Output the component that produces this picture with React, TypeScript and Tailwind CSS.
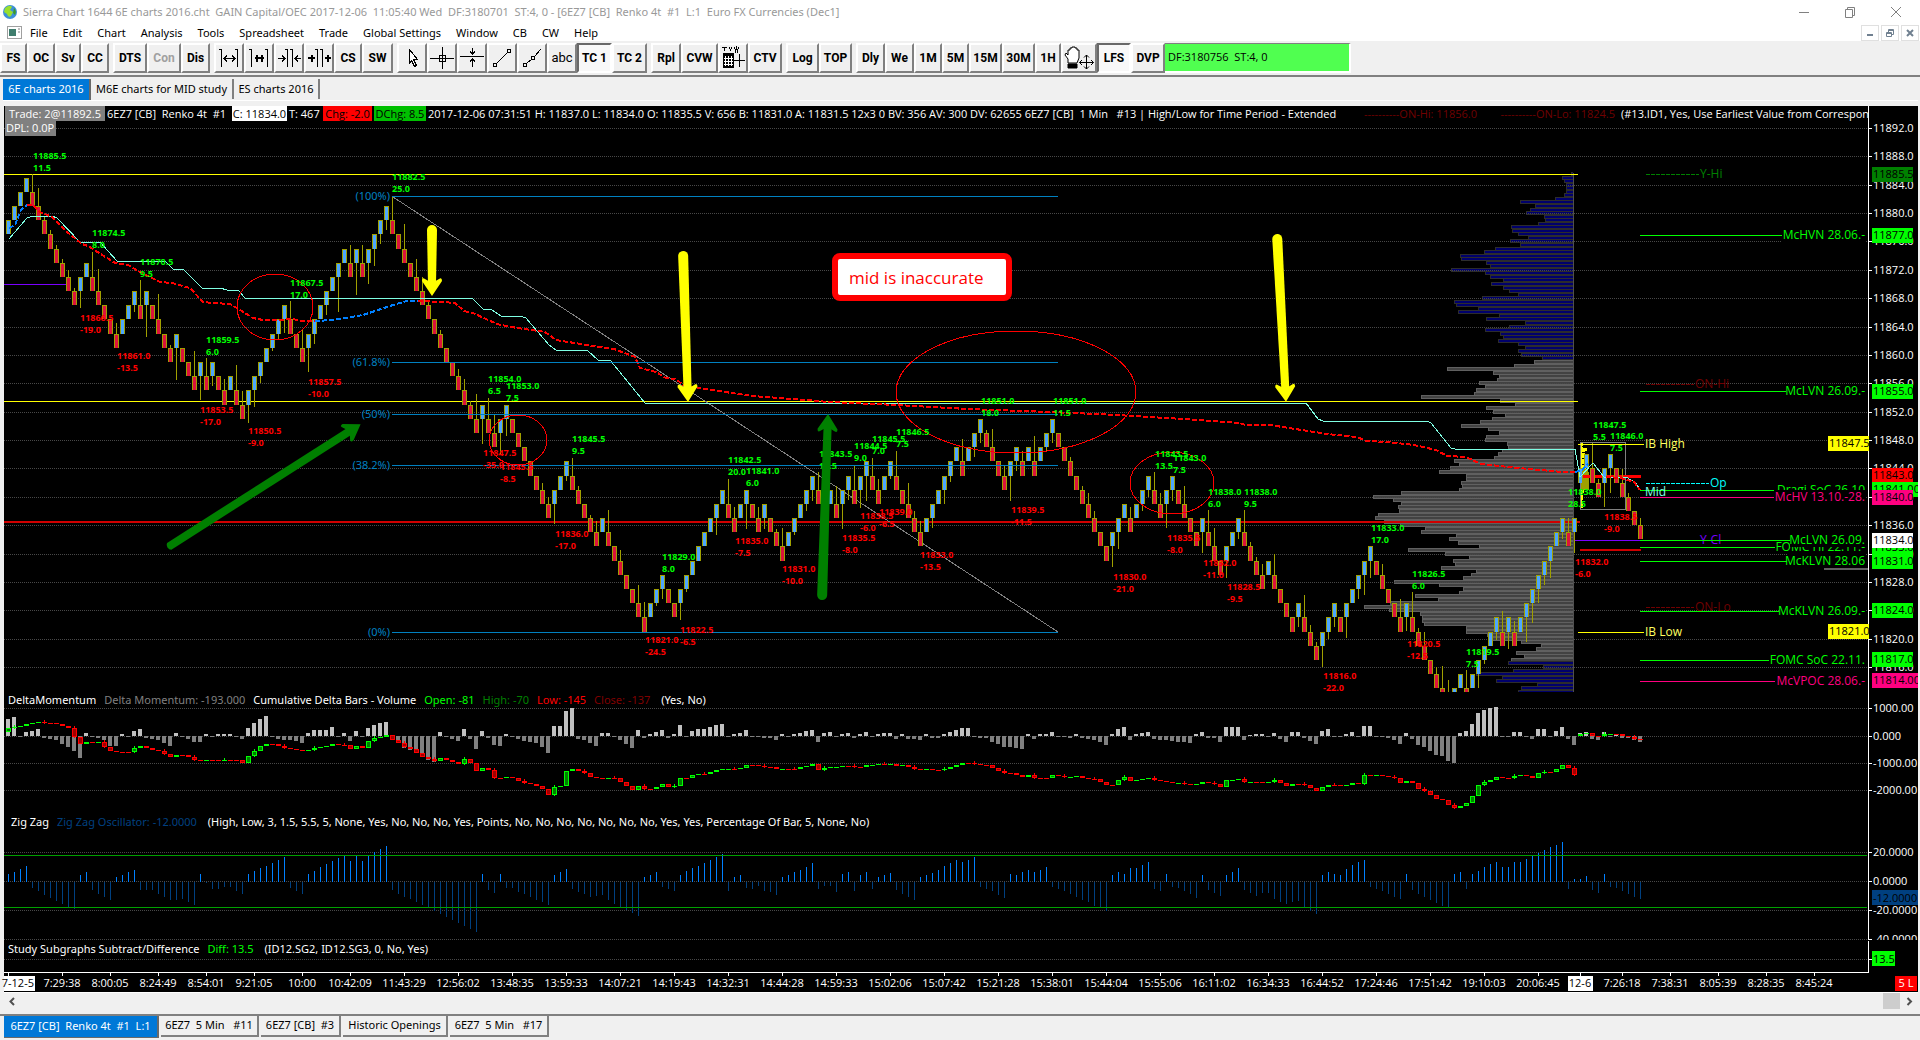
import type { ReactNode } from 'react'

const LIME = '#00ff00'
const RED = '#ff0000'
const PINK = '#ff0080'
const YELLOW = '#ffff00'
const FIB = '#0080c0'
const MAROON = '#700000'

const barX = (i: number) => 9 + i * 6
const priceY = (p: number) => Math.round(128 + (11892 - p) * 7.092)

// brick runs of the first session: positive = up bricks, negative = down bricks
const runs = [
  4, -8, 2, -5, 3, -1, 1, -4, 1, -3, 1, -1, 1, -2, 1, -2, 7, -3, 7, -1, 1, -1, 4, -15, 1, -2, 2, -7, 3, -5, 1, -7, 3, -2,
  8, -2, 2, -2, 1, -3, 5, -2, 1, -1, 2, -1, 2, -2, 2, -5, 6, -1, 3, -4, 2, -1, 1, -1, 3, -9, 3, -1, 3, -2, 2, -4, 1, -3,
  3, -4, 1, -4, 1, -3, 3, -1, 5, -5, 1, -7, 2, -1, 5, -1, 1, -1, 8, -1, 1,
]
const runsToday = [2, -2, 2, -5]

const wicks: Record<number, number> = {
  4: 18, 5: 18, 6: 4, 7: 4, 8: 4, 9: 4, 10: 7, 11: 3, 12: 17, 14: 25, 15: 22, 18: 11, 21: 7, 22: 25, 23: 32, 25: 25, 27: 3,
  28: 32, 31: 25, 32: 24, 33: 18, 34: 10, 36: 11, 38: 25, 39: 14, 40: 18, 41: 17, 42: 7, 44: 3, 45: 6, 46: 14, 47: 18,
  49: 18, 50: 24, 51: 10, 53: 10, 55: 35, 57: 18, 58: 32, 59: 18, 60: 21, 61: 17, 62: 10, 63: 10, 64: 24, 66: 25, 68: 18,
  69: 14, 70: 3, 72: 4, 75: 7, 76: 11, 77: 4, 78: 25, 79: 25, 80: 21, 81: 18, 82: 22, 83: 17, 89: 7, 90: 7, 91: 20, 93: 5,
  94: 18, 95: 4, 97: 3, 98: 11, 100: 22, 102: 11, 105: 18, 106: 15, 108: 3, 109: 10, 112: 17, 113: 3, 118: 17, 120: 25,
  121: 11, 123: 25, 125: 11, 126: 11, 128: 3, 129: 18, 131: 3, 133: 7, 134: 11, 135: 18, 138: 18, 139: 25, 140: 10,
  141: 25, 142: 18, 143: 25, 144: 18, 145: 11, 147: 3, 148: 25, 150: 21, 151: 7, 152: 11, 154: 10, 156: 14, 157: 6,
  159: 22, 161: 10, 162: 10, 163: 3, 164: 18, 166: 10, 167: 25, 168: 10, 169: 10, 171: 25, 173: 4, 174: 10, 177: 4, 179: 4,
  180: 11, 181: 7, 184: 21, 185: 17, 187: 11, 189: 7, 190: 7, 191: 18, 192: 11, 193: 24, 194: 11, 196: 18, 199: 21,
  200: 22, 201: 18, 203: 17, 205: 7, 206: 22, 207: 4, 208: 4, 209: 11, 211: 21, 215: 10, 216: 22, 217: 7, 218: 4, 219: 21,
  220: 7, 221: 10, 223: 21, 225: 10, 226: 20, 227: 17, 229: 11, 232: 18, 233: 14, 234: 25, 235: 4, 236: 14, 238: 7,
  239: 22, 240: 22, 243: 18, 245: 14, 246: 4, 248: 8, 249: 21, 250: 17, 251: 11, 253: 25, 254: 20, 255: 14, 256: 10,
  257: 17, 259: 7, 260: 14, 261: 21, 264: 25, 265: 4, 266: 24, 267: 25, 269: 14, 270: 4, 272: 7,
}

type Brick = { i: number; top: number; up: boolean }

function buildBricks(seq: number[], start: number, firstIndex: number) {
  const out: Brick[] = []
  let top = start
  let i = firstIndex
  for (const run of seq) {
    for (let n = 0; n < Math.abs(run); n++) {
      top += run > 0 ? 2 : -2
      out.push({ i, top, up: run > 0 })
      i++
    }
  }
  return out
}

const bricks = [...buildBricks(runs, 11877, 0), ...buildBricks(runsToday, 11842, 262)]

// volume at price, one row every half point from 11885.5 downwards
const profile = [
  2, 11, 9, 7, 7, 7, 9, 18, 53, 38, 43, 47, 29, 28, 35, 62, 61, 55, 45, 63, 53, 78, 89, 113, 112, 87, 83, 122, 88, 83, 70,
  82, 70, 64, 55, 91, 119, 117, 95, 115, 74, 87, 48, 64, 88, 73, 70, 75, 55, 48, 55, 52, 31, 39, 59, 126, 80, 74, 76, 94,
  88, 97, 99, 152, 73, 58, 87, 80, 68, 81, 93, 112, 85, 74, 87, 88, 66, 65, 71, 75, 79, 119, 114, 123, 134, 107, 107, 112,
  111, 114, 172, 200, 180, 172, 175, 174, 195, 198, 189, 173, 148, 152, 117, 124, 115, 94, 165, 128, 104, 120, 118, 132,
  97, 102, 110, 179, 134, 110, 114, 158, 135, 183, 209, 184, 153, 151, 151, 149, 107, 107, 86, 82, 52, 32, 37, 57, 49, 62,
  65, 30, 60, 97, 71, 77, 36, 52, 55,
]

// same for the new session, three pixels a row
const profileToday = [3, 3, 7, 5, 8, 5, 7, 4, 6, 8, 9, 9, 9, 9, 9, 9, 4, 3, 3, 3, 3, 3]

const momentum = [
  17, 19, -1, 4, 5, 7, -2, -3, -4, -8, -11, -15, -22, 3, -1, -2, -4, -10, -10, 2, -1, 5, 7, -2, -3, -4, -7, -10, 3, -1, -3,
  -6, -6, 2, -1, 2, 2, 2, -1, -3, 8, 13, 17, 20, -1, -3, -4, -4, -5, -7, 3, 6, 6, 6, 9, -1, 3, -5, 5, -1, 8, 11, 13, 14,
  -4, -7, -12, -14, -14, -17, -24, -26, 4, -1, -3, -5, 7, -3, -13, 5, -2, -9, -10, 2, -1, -3, -5, -6, -7, -11, -17, 10, 10,
  25, 28, -3, -4, -7, -10, 3, 3, -1, -4, -8, -12, 6, -2, 2, 4, 6, -2, 2, 11, -1, 5, 7, 7, 9, 11, 12, -1, 2, 3, 6, -1, -1,
  -2, -2, -4, 2, -1, 2, 3, 5, 6, -6, 3, 4, -1, 2, 3, -2, 2, 4, -1, 2, 3, 3, -3, 2, -3, -3, -4, 2, -2, -2, 2, 4, 6, 8, 8,
  -1, -2, -2, -6, -8, -11, -11, -12, -13, 2, -3, 2, 2, 4, -1, -1, -2, 2, -2, -3, -4, -6, -9, 2, 7, 9, -4, 2, 3, 4, -3, -4,
  -4, -5, -6, -6, -7, 2, 4, -2, -2, -6, 9, 9, 9, -4, 1, 2, 2, -1, 3, -3, -6, 4, 4, -2, -5, -8, 5, 7, -1, -1, 2, 4, -1, 10,
  10, -1, -1, -2, -4, -8, 3, -3, -9, -11, -15, -19, -20, -25, -27, 3, 5, 12, 23, 26, 28, 29, -1, -1, 4, 4, -1, -3, 7, 7,
  -1, 5, 9, -3, -9, 3, 4, -3, -4, 4, -1, 2, -2, -2, -4, -6,
]

// cumulative delta closes, in pixels below the main graph
const delta = [
  48, 47, 46, 44, 43, 42, 43, 43, 44, 46, 48, 57, 64, 62, 62, 62, 67, 71, 72, 72, 72, 68, 66, 68, 70, 71, 74, 77, 75, 75,
  77, 80, 80, 80, 80, 80, 80, 80, 80, 83, 76, 71, 66, 64, 64, 66, 68, 69, 70, 71, 70, 68, 67, 66, 64, 65, 65, 69, 66, 68,
  61, 58, 57, 55, 60, 63, 67, 69, 73, 77, 79, 81, 78, 80, 82, 84, 79, 83, 91, 88, 90, 98, 98, 97, 98, 101, 103, 104, 106,
  109, 115, 107, 106, 91, 89, 91, 93, 97, 98, 99, 98, 98, 102, 106, 110, 106, 109, 109, 107, 104, 107, 106, 98, 98, 95, 94,
  94, 92, 90, 89, 89, 89, 88, 85, 85, 86, 87, 87, 89, 89, 89, 89, 87, 86, 84, 90, 88, 87, 87, 86, 86, 87, 87, 85, 85, 84,
  84, 84, 86, 85, 87, 89, 89, 89, 90, 90, 89, 87, 85, 83, 83, 84, 85, 85, 88, 91, 93, 93, 95, 97, 95, 98, 98, 98, 95, 96,
  97, 97, 96, 98, 99, 99, 102, 105, 105, 100, 97, 101, 100, 99, 98, 100, 101, 102, 103, 103, 104, 105, 104, 102, 103, 104,
  107, 100, 100, 99, 102, 102, 102, 102, 102, 100, 103, 106, 104, 104, 105, 108, 111, 107, 105, 105, 106, 105, 103, 104,
  95, 95, 95, 96, 97, 98, 103, 101, 103, 109, 111, 115, 119, 120, 125, 128, 126, 123, 116, 105, 102, 100, 97, 98, 98, 96,
  95, 96, 98, 93, 92, 92, 89, 85, 88, 95, 54, 53, 56, 56, 54, 54, 54, 56, 57, 59, 59,
]

const zigzag = [
  8, 10, 13, 16, -6, -9, -13, -16, -19, -22, -25, -27, 7, 10, -8, -12, -15, -18, 5, 7, 10, 12, -8, -8, -8, -12, -15, -18,
  -18, -17, -20, -23, 8, -1, -7, -7, -5, -5, -9, -12, 8, 11, 14, 16, 19, 22, 25, -6, -9, -12, 8, 11, 15, 18, 21, 24, 26,
  21, 26, 21, 26, 30, 33, 36, -8, -12, -15, -17, -20, -23, -26, -29, -32, -35, -38, -41, -44, -47, -50, 8, -8, -11, 8, -6,
  -6, -10, -12, -15, -18, -20, -23, 7, 10, 13, -7, -10, -12, -15, -14, -13, -18, -22, -25, -28, -31, -34, 5, 7, 10, -5, -7,
  -9, 7, 11, 14, 16, 19, 22, 25, 28, -9, 5, 7, -6, -7, -4, -9, -10, -13, 5, 7, 10, 12, 15, 19, -7, -4, -4, -10, 8, 10, -9,
  7, 10, -7, 5, 7, 9, -8, -12, -15, -18, 5, 7, 9, 12, 16, 19, 22, 20, 22, 25, -5, -7, -9, -13, -16, 8, 7, 10, 12, 10, 12,
  15, -5, -7, -9, -12, -15, -18, -20, -24, -26, -29, 7, 10, 8, 14, 14, 17, 20, -7, -9, 8, -5, -6, -9, -12, -16, 7, -8,
  -11, -14, 7, 10, 14, -8, -11, -14, -11, -11, -17, -20, -22, -20, -19, -26, -29, -32, 7, 10, 8, 7, 13, 17, 20, 22, -5,
  -7, -9, -12, -15, -17, 8, -8, -12, -15, -18, -21, -24, -26, 8, 10, -7, 8, 11, 15, 18, 20, 15, 15, 20, 20, 23, 26, 29,
  32, 35, 37, 40, -7, 3, 3, 6, -8, -11, 8, -5, -6, -9, -12, -15, -17,
]

// swing labels: x, y, price, length of the swing
const swings: [number, number, string, string][] = [
  [33, 156, '11885.5', '11.5'], [92, 233, '11874.5', '8.0'], [140, 262, '11870.5', '9.5'], [206, 340, '11859.5', '6.0'],
  [290, 283, '11867.5', '17.0'], [392, 177, '11882.5', '25.0'], [80, 318, '11866.5', '-19.0'], [117, 356, '11861.0', '-13.5'],
  [200, 410, '11853.5', '-17.0'], [248, 431, '11850.5', '-9.0'], [308, 382, '11857.5', '-10.0'], [488, 379, '11854.0', '6.5'],
  [506, 386, '11853.0', '7.5'], [483, 453, '11847.5', '-35.0'], [500, 467, '11845.5', '-8.5'], [572, 439, '11845.5', '9.5'],
  [728, 460, '11842.5', '20.0'], [746, 471, '11841.0', '6.0'], [819, 454, '11843.5', '12.5'], [854, 446, '11844.5', '9.0'],
  [872, 439, '11845.5', '7.0'], [896, 432, '11846.5', '7.5'], [555, 534, '11836.0', '-17.0'], [662, 557, '11829.0', '8.0'],
  [735, 541, '11835.0', '-7.5'], [782, 569, '11831.0', '-10.0'], [645, 640, '11821.0', '-24.5'], [680, 630, '11822.5', '-6.5'],
  [842, 538, '11835.5', '-8.0'], [860, 516, '11838.5', '-6.0'], [879, 512, '11839.0', '-6.5'], [920, 555, '11833.0', '-13.5'],
  [981, 401, '11851.0', '18.0'], [1053, 401, '11851.0', '11.5'], [1155, 454, '11843.5', '13.5'], [1173, 458, '11843.0', '7.5'],
  [1208, 492, '11838.0', '6.0'], [1244, 492, '11838.0', '9.5'], [1371, 528, '11833.0', '17.0'], [1011, 510, '11839.5', '-11.5'],
  [1113, 577, '11830.0', '-21.0'], [1167, 538, '11835.5', '-8.0'], [1203, 563, '11832.0', '-11.0'], [1227, 587, '11828.5', '-9.5'],
  [1323, 676, '11816.0', '-22.0'], [1412, 574, '11826.5', '6.0'], [1466, 652, '11819.5', '7.5'], [1568, 492, '11838.0', '28.5'],
  [1593, 425, '11847.5', '5.5'], [1610, 436, '11846.0', '7.5'], [1407, 644, '11820.5', '-12.5'], [1575, 562, '11832.0', '-6.0'],
  [1604, 517, '11838.5', '-9.0'],
]

const fibs: [number, string][] = [[196, '(100%)'], [362, '(61.8%)'], [414, '(50%)'], [465, '(38.2%)'], [632, '(0%)']]

// named levels on the right: y, end of line, label, colour
const levels: [number, number, string, string][] = [
  [235, 1782, 'McHVN 28.06.-', LIME], [391, 1786, 'McLVN 26.09.-', LIME], [490, 1776, 'Dragi SoC 26.10', LIME],
  [547, 1775, 'FOMC Hi 22.11.-', LIME], [561, 1787, 'McKLVN 28.06', LIME], [611, 1779, 'McKLVN 26.09.-', LIME],
  [660, 1769, 'FOMC SoC 22.11.', LIME], [681, 1775, 'McVPOC 28.06.-', PINK], [497, 1774, 'McHV 13.10.-28.', PINK],
  [540, 1790, 'McLVN 26.09.', LIME],
]

// price boxes: y, x, width, text, background
const boxes: [number, number, number, string, string][] = [
  [174, 1872, 41, '11885.5', '#008000'], [235, 1872, 41, '11877.0', LIME], [391, 1872, 41, '11855.0', LIME],
  [443, 1828, 41, '11847.5', YELLOW], [475, 1872, 41, '11843.0', RED], [489, 1872, 46, '11841.00', LIME],
  [497, 1872, 41, '11840.0', PINK], [547, 1872, 41, '11833.0', LIME], [540, 1872, 41, '11834.0', '#ffffff'],
  [561, 1872, 41, '11831.0', LIME], [610, 1872, 41, '11824.0', LIME], [631, 1828, 41, '11821.0', YELLOW],
  [659, 1872, 41, '11817.0', LIME], [680, 1872, 46, '11814.00', PINK],
]

const times: [number, string][] = [
  [62, '7:29:38'], [110, '8:00:05'], [158, '8:24:49'], [206, '8:54:01'], [254, '9:21:05'], [302, '10:00'],
  [350, '10:42:09'], [404, '11:43:29'], [458, '12:56:02'], [512, '13:48:35'], [566, '13:59:33'], [620, '14:07:21'],
  [674, '14:19:43'], [728, '14:32:31'], [782, '14:44:28'], [836, '14:59:33'], [890, '15:02:06'], [944, '15:07:42'],
  [998, '15:21:28'], [1052, '15:38:01'], [1106, '15:44:04'], [1160, '15:55:06'], [1214, '16:11:02'], [1268, '16:34:33'],
  [1322, '16:44:52'], [1376, '17:24:46'], [1430, '17:51:42'], [1484, '19:10:03'], [1538, '20:06:45'], [1622, '7:26:18'],
  [1670, '7:38:31'], [1718, '8:05:39'], [1766, '8:28:35'], [1814, '8:45:24'],
]

const midLine =
  '9,239 27,218 33,216 52,216 57,218 80,242 100,242 117,261 165,261 173,269 184,270 202,288 220,288 227,290 238,290 245,298 472,298 483,309 492,310 501,316 520,316 526,318 549,345 556,350 587,350 598,360 610,360 645,403 1306,403 1318,419 1323,421 1427,421 1431,423 1451,448 1455,449 1575,449 1580,477 1593,463 1604,477 1626,477 1636,483 1640,490'
const vwapRed = [
  '27,205 33,205 40,212 52,217 67,232 82,244 88,246 115,263 128,265 140,272 160,282 172,283 190,288 203,302 213,303 230,304 240,310 253,318 263,320 277,320 292,319 303,321 315,321',
  '418,301 443,302 455,303 464,311 473,313 497,324 511,327 545,332 556,340 587,345 614,349 635,357 640,368 656,372 666,378 676,379 683,385 705,389 752,396 807,400 828,402 897,405 967,409 1050,412 1117,415 1183,419 1240,423 1245,425 1270,425 1327,434 1357,437 1366,441 1388,442 1414,445 1436,450 1447,456 1466,457 1481,464 1518,468 1562,472 1575,472',
  '1606,477 1621,478 1634,482 1640,490',
]
const vwapBlue = [
  '9,228 15,225 21,210 27,205',
  '315,321 333,320 363,315 393,305 407,301 418,301',
  '1575,472 1582,470 1588,464',
]

function GridLine({ y }: { y: number }) {
  return <path d={`M4 ${y}.5H1868`} stroke="#484848" strokeDasharray="1 1" />
}

function AxisLabel({ y, text }: { y: number; text: string }) {
  return (
    <g>
      <path d={`M1868 ${y}.5h4`} stroke="#fff" />
      <text x="1873" y={y + 4} fill="#fff">{text}</text>
    </g>
  )
}

function Arrow({ x1, y1, x2, y2, color, width = 10 }: { x1: number; y1: number; x2: number; y2: number; color: string; width?: number }) {
  const angle = (Math.atan2(y2 - y1, x2 - x1) * 180) / Math.PI
  const len = Math.round(Math.hypot(x2 - x1, y2 - y1))
  return (
    <g transform={`translate(${x1} ${y1}) rotate(${angle})`} fill={color} shapeRendering="auto">
      <path d={`M5 ${-width / 2}L${len - 12} -4V4L5 ${width / 2}A5 5 0 0 1 5 ${-width / 2}Z`} />
      <path d={`M${len} 0L${len - 15} 10Q${len - 19} 10 ${len - 17} 7L${len - 13} 0L${len - 17} -7Q${len - 19} -10 ${len - 15} -10Z`} />
    </g>
  )
}

function PriceGraph() {
  const grid: number[] = []
  for (let p = 11892; p >= 11816; p -= 4) grid.push(p)

  return (
    <svg viewBox="4 121 1914 571" className="block w-full text-[11px]" shapeRendering="crispEdges" fill="none">
      {profile.map((w, k) => {
        const y = priceY(11885.5 - k * 0.5) - 2
        const blue = k < 53 || k > 137
        return (
          <g key={k}>
            <rect x={1573 - w} y={y} width={w} height="4" fill={blue ? '#2c2c2c' : '#606060'} />
            <rect x={1574 - w} y={y + 1} width={w - 1} height="2" fill={blue ? '#00006c' : '#424242'} />
          </g>
        )
      })}
      <path d="M1573.5 173V692" stroke="#505050" />
      {grid.map((p) => <GridLine key={p} y={priceY(p)} />)}
      <path d="M4 174.5H1578M4 401.5H1578" stroke={YELLOW} />
      <path d="M4 522H1580" stroke="#d00000" strokeWidth="2" />
      <path d="M4 284.5H67M1575 540.5H1640" stroke="#7a00ff" />
      <path d="M393 197L1058 632" stroke="#808080" />

      {/* opening range box and its small profile */}
      {profileToday.map((w, k) => (
        <g key={k}>
          <rect x="1580" y={442 + k * 3} width={w} height="3" fill={k > 8 && k < 16 ? '#a0a000' : YELLOW} />
          {k % 2 === 1 && (k < 9 || k > 15) && <rect x="1582" y={443 + k * 3} width={w - 2} height="1" fill="#000" />}
        </g>
      ))}
      <path d="M1580.5 442.5H1625.5V509.5H1580.5Z" stroke="#808080" />
      <path d="M1583 476H1641" stroke={RED} strokeWidth="3" />
      <path d="M1580 550H1641" stroke="#d00000" strokeWidth="2" />

      {bricks.map((b) => {
        const y = priceY(b.top)
        const h = priceY(b.top - 2) - y
        const wick = wicks[b.i] ?? 0
        const x = barX(b.i)
        return (
          <g key={b.i}>
            {wick > 0 && <rect x={x - 1} y={b.up ? y + h : y - wick} width="1" height={wick} fill="#a0a000" />}
            <rect x={x - 3} y={y} width="5" height={h} fill="#a0a000" />
            <rect x={x - 2} y={y + 1} width="3" height={h - 1} fill={b.up ? '#4da6ff' : '#dc143c'} />
          </g>
        )
      })}

      <polyline points={midLine} stroke="#7fffe4" />
      {vwapRed.map((p) => <polyline key={p} points={p} stroke={RED} strokeWidth="2" strokeDasharray="5 2" />)}
      {vwapBlue.map((p) => <polyline key={p} points={p} stroke="#0080ff" strokeWidth="2" strokeDasharray="5 2" />)}

      {fibs.map(([y, label]) => (
        <g key={label}>
          <path d={`M392 ${y}.5H1058`} stroke={FIB} />
          <text x="390" y={y + 4} textAnchor="end" fill={FIB} className="font-['Noto_Sans',sans-serif] text-[11px]">{label}</text>
        </g>
      ))}

      <g stroke={RED}>
        <ellipse cx="275" cy="307" rx="38" ry="33" />
        <ellipse cx="518" cy="440" rx="29" ry="25" />
        <ellipse cx="1016" cy="392" rx="120" ry="61" />
        <ellipse cx="1172" cy="483" rx="42" ry="31" />
      </g>

      <g className="text-[9px] font-bold">
        {swings.map(([x, y, price, size]) => (
          <g key={`${x}-${y}`} fill={size.startsWith('-') ? RED : LIME}>
            <text x={x} y={y + 3}>{price}</text>
            <text x={x} y={y + 15}>{size}</text>
          </g>
        ))}
      </g>

      <Arrow x1={432} y1={225} x2={432} y2={296} color={YELLOW} />
      <Arrow x1={683} y1={251} x2={688} y2={402} color={YELLOW} />
      <Arrow x1={1277} y1={234} x2={1286} y2={402} color={YELLOW} />
      <Arrow x1={165} y1={549} x2={361} y2={424} color="#008000" width={8} />
      <Arrow x1={822} y1={600} x2={828} y2={414} color="#008000" />

      <g shapeRendering="auto">
        <rect x="835" y="256" width="174" height="42" rx="5" fill="#fff" stroke={RED} strokeWidth="6" />
        <text x="849" y="284" fill={RED} className="text-[17px]">mid is inaccurate</text>
      </g>

      <g className="text-[12px]">
        {levels.map(([y, end, label, color]) => (
          <g key={y}>
            <path d={`M1640 ${y}.5H${end}`} stroke={color} />
            <rect x={end} y={y - 7} width={1866 - end} height="14" fill="#000" />
            <text x="1865" y={y + 4} textAnchor="end" fill={color}>{label}</text>
          </g>
        ))}
        <text x="1700" y="544" fill="#7a00ff">Y-Cl</text>
        <path d="M1640 540.5H1790" stroke={LIME} />
        <path d="M1646 174.5H1699" stroke="#008000" strokeDasharray="4 1" />
        <text x="1700" y="178" fill="#008000">Y-Hi</text>
        <path d="M1646 384.5H1694" stroke={MAROON} strokeDasharray="4 1" />
        <text x="1695" y="388" fill={MAROON}>ON-Hi</text>
        <path d="M1646 607.5H1694" stroke={MAROON} strokeDasharray="4 1" />
        <text x="1695" y="611" fill={MAROON}>ON-Lo</text>
        <path d="M1646 483.5H1709" stroke="#00ffff" strokeDasharray="4 1" />
        <text x="1710" y="487" fill="#00ffff">Op</text>
        <text x="1645" y="496" fill="#7fffe4">Mid</text>
        <path d="M1578 444.5H1644M1578 632.5H1644" stroke={YELLOW} />
        <text x="1645" y="448" fill="#ffff60">IB High</text>
        <text x="1645" y="636" fill="#ffff60">IB Low</text>
      </g>
      <path d="M1824 569H1868" stroke="#606060" strokeWidth="2" />

      <path d="M1868.5 121V692" stroke="#fff" />
      {grid.map((p) => <AxisLabel key={p} y={priceY(p)} text={`${p}.0`} />)}
      {boxes.map(([y, x, w, text, bg]) => (
        <g key={text}>
          <rect x={x} y={y - 7} width={w} height="15" fill={bg} />
          <text x={x + 1} y={y + 4} fill="#000">{text}</text>
        </g>
      ))}

      <rect x="5" y="121" width="51" height="15" fill="#808080" />
      <text x="6" y="132" fill="#fff">DPL: 0.0P</text>
    </svg>
  )
}

function DeltaGraph() {
  return (
    <svg viewBox="4 708 1914 106" className="block w-full overflow-visible text-[11px]" shapeRendering="crispEdges" fill="none">
      {[708, 736, 763, 790].map((y) => <GridLine key={y} y={y} />)}
      {momentum.map((v, i) => (
        <rect key={i} x={barX(i) - 3} y={v > 0 ? 736 - v : 736} width="4" height={Math.abs(v)} fill={v > 0 ? '#c0c0c0' : '#808080'} />
      ))}
      {delta.map((close, i) => {
        const open = i === 0 ? 52 : i === 262 ? 56 : delta[i - 1]
        const up = close < open || (close === open && i % 3 === 0)
        const y = 680 + Math.min(open, close)
        const h = Math.abs(open - close)
        const x = barX(i) - 3
        return (
          <g key={i}>
            {i % 5 === 1 && <rect x={x + 2} y={y - 2} width="1" height={h + 3} fill={up ? LIME : RED} />}
            <rect x={x} y={y} width="5" height={Math.max(h, 1)} fill={up ? LIME : RED} />
            {h > 2 && <rect x={x + 1} y={y + 1} width="3" height={h - 2} fill={up ? '#008000' : '#a00000'} />}
          </g>
        )
      })}
      <path d="M1868.5 708V814" stroke="#fff" />
      <AxisLabel y={708} text="1000.00" />
      <AxisLabel y={736} text="0.000" />
      <AxisLabel y={763} text="-1000.00" />
      <AxisLabel y={790} text="-2000.00" />
    </svg>
  )
}

function ZigZagGraph() {
  return (
    <svg viewBox="4 830 1914 110" className="block w-full text-[11px]" shapeRendering="crispEdges" fill="none">
      {[852, 881, 910, 939].map((y) => <GridLine key={y} y={y} />)}
      {zigzag.map((v, i) => (
        <rect key={i} x={barX(i) - 1} y={v > 0 ? 882 - v : 882} width="1" height={Math.abs(v)} fill={v > 0 ? '#0080ff' : '#004080'} />
      ))}
      <path d="M4 855.5H1867M4 907.5H1867" stroke="#00a000" />
      <path d="M1868.5 830V940" stroke="#fff" />
      <AxisLabel y={852} text="20.0000" />
      <AxisLabel y={881} text="0.0000" />
      <AxisLabel y={910} text="-20.0000" />
      <AxisLabel y={939} text="-40.0000" />
      <rect x="1872" y="890" width="46" height="15" fill="#004080" />
      <text x="1873" y="902" fill="#000">-12.0000</text>
    </svg>
  )
}

function TimeScale() {
  return (
    <svg viewBox="4 957 1914 35" className="block w-full overflow-visible text-[11px]" shapeRendering="crispEdges" fill="none">
      <GridLine y={959} />
      <path d="M1868.5 957V972M4 972.5H1869" stroke="#fff" />
      <path d="M1868 959.5h4" stroke="#fff" />
      <rect x="1872" y="951" width="23" height="15" fill={LIME} />
      <text x="1873" y="963" fill="#000">13.5</text>
      {times.map(([x, label]) => (
        <g key={label}>
          <path d={`M${x}.5 972v4`} stroke="#fff" />
          <text x={x} y="987" textAnchor="middle" fill="#fff">{label}</text>
        </g>
      ))}
      <path d="M8.5 972v4M1580.5 972v4" stroke="#fff" />
      <rect x="4" y="976" width="31" height="15" fill="#fff" />
      <text x="34" y="987" textAnchor="end" fill="#000">7-12-5</text>
      <rect x="1568" y="976" width="25" height="15" fill="#fff" />
      <text x="1580" y="987" textAnchor="middle" fill="#000">12-6</text>
      <rect x="1895" y="976" width="22" height="15" fill={RED} />
      <text x="1906" y="987" textAnchor="middle" fill="#fff">5 L</text>
    </svg>
  )
}

function StudyTitle({ children }: { children: ReactNode }) {
  return (
    <div className="flex pr-[49px]">
      <div className="flex h-4 flex-1 items-center gap-2 overflow-hidden border-r border-white pl-1 font-['Noto_Sans',sans-serif] leading-4 whitespace-pre">
        {children}
      </div>
    </div>
  )
}

function ToolButton({ width, pressed, disabled, children, title }: { width: string; pressed?: boolean; disabled?: boolean; children: ReactNode; title?: string }) {
  return (
    <button
      type="button"
      title={title}
      aria-label={title}
      disabled={disabled}
      className={`${width} flex h-[30px] shrink-0 items-center justify-center border-2 whitespace-nowrap disabled:text-[#a0a0a0] ${
        pressed ? 'border-t-[#696969] border-r-white border-b-white border-l-[#696969] bg-[#f8f8f8]' : 'border-t-white border-r-[#808080] border-b-[#808080] border-l-white bg-[#f0f0f0]'
      }`}
    >
      {children}
    </button>
  )
}

function Icon({ children }: { children: ReactNode }) {
  return (
    <svg width="24" height="24" viewBox="0 0 24 24" fill="none" stroke="#000" className="shrink-0" shapeRendering="crispEdges">
      {children}
    </svg>
  )
}

function Group({ children }: { children: ReactNode }) {
  return <div className="flex">{children}</div>
}

const menus = ['File', 'Edit', 'Chart', 'Analysis', 'Tools', 'Spreadsheet', 'Trade', 'Global Settings', 'Window', 'CB', 'CW', 'Help']

export default function App() {
  return (
    <div className="min-h-screen w-full overflow-hidden bg-[#f0f0f0] font-['Open_Sans','Noto_Sans',sans-serif] text-[11px] text-black">
      <header className="bg-white font-['Noto_Sans',sans-serif]">
        <div className="flex h-6 items-center pl-0.5 text-[#999999]">
          <svg width="16" height="16" viewBox="0 0 16 16">
            <circle cx="8" cy="8" r="7" fill="#3d8fd8" />
            <path d="M3 4Q8 0 10 3L8 6L11 8L9 12Q6 14 5 10L2 8Z" fill="#9adf2e" />
            <path d="M12 4Q15 7 13 11L11 9Z" fill="#3c9c28" />
          </svg>
          <h1 className="flex-1 pl-[5px] whitespace-pre">
            Sierra Chart 1644 6E charts 2016.cht  GAIN Capital/OEC 2017-12-06  11:05:40 Wed  DF:3180701  ST:4, 0 - [6EZ7 [CB]  Renko 4t  #1  L:1  Euro FX Currencies (Dec1]
          </h1>
          <div className="flex gap-[34px] pr-[18px]">
            <button type="button" aria-label="Minimize">
              <svg width="12" height="12" fill="none" stroke="#808080"><path d="M1 6.5h10" /></svg>
            </button>
            <button type="button" aria-label="Restore">
              <svg width="12" height="12" fill="none" stroke="#808080"><path d="M1.5 3.5h7v8h-7zM3.5 3.5v-2h7v8h-2" /></svg>
            </button>
            <button type="button" aria-label="Close">
              <svg width="12" height="12" fill="none" stroke="#808080"><path d="M1 1l10 10M11 1L1 11" /></svg>
            </button>
          </div>
        </div>
        <nav className="flex h-[17px] items-center pl-[7px]">
          <svg width="15" height="13" viewBox="0 0 15 13">
            <rect x="0.5" y="0.5" width="14" height="12" fill="#fff" stroke="#a0a0a0" />
            <path d="M2 3h7v7h-7z" fill="#3f7d6d" />
            <path d="M11 3h2M11 6h2" stroke="#808080" />
          </svg>
          <div className="flex flex-1 gap-[15px] pl-2 leading-4">
            {menus.map((m) => <button key={m} type="button">{m}</button>)}
          </div>
          <div className="flex gap-0.5 pr-px">
            <button type="button" aria-label="Minimize chart" className="border border-[#e0e0e0] px-0.5">
              <svg width="12" height="14" stroke="#708090" strokeWidth="2"><path d="M3 9h6" /></svg>
            </button>
            <button type="button" aria-label="Restore chart" className="border border-[#e0e0e0] px-0.5">
              <svg width="12" height="14" fill="none" stroke="#708090"><path d="M2.5 6.5h5v4h-5zM4.5 6v-2.5h5v5h-2M4 4.5h6M2 7.5h6" /></svg>
            </button>
            <button type="button" aria-label="Close chart" className="border border-[#e0e0e0] px-0.5">
              <svg width="12" height="14" stroke="#708090" strokeWidth="2"><path d="M3 4l6 6M9 4l-6 6" /></svg>
            </button>
          </div>
        </nav>
      </header>

      <div className="flex h-[36px] gap-1 border-b-2 border-[#808080] pt-0.5 font-[Roboto,sans-serif] text-[12px] font-bold">
        <Group>
          <ToolButton width="w-[27px]">FS</ToolButton>
          <ToolButton width="w-[28px]">OC</ToolButton>
          <ToolButton width="w-[26px]">Sv</ToolButton>
          <ToolButton width="w-[28px]">CC</ToolButton>
        </Group>
        <Group>
          <ToolButton width="w-[34px]">DTS</ToolButton>
          <ToolButton width="w-[34px]" disabled>Con</ToolButton>
          <ToolButton width="w-[29px]">Dis</ToolButton>
        </Group>
        <Group>
          <ToolButton width="w-[30px]" title="Increase bar spacing">
            <Icon><path d="M4.500 3v18M2 3.500h3M20.500 3v18M18 3.500h3M7 12.500h11M10 9.500l-3 3l3 3M15 9.500l3 3l-3 3" /></Icon>
          </ToolButton>
          <ToolButton width="w-[30px]" title="Increase bar width">
            <Icon>
              <path d="M4.500 3v18M2 3.500h3M20.500 3v18M18 3.500h3" />
              <path d="M8 12h9M10 9v7M15 9v7" strokeWidth="2" />
            </Icon>
          </ToolButton>
          <ToolButton width="w-[30px]" title="Decrease bar spacing">
            <Icon><path d="M10.500 3v18M8 3.500h3M15.500 3v18M13 3.500h3M1 12.500h7M18 12.500h6M5 9.500l3 3l-3 3M21 9.500l-3 3l3 3" /></Icon>
          </ToolButton>
          <ToolButton width="w-[30px]" title="Decrease bar width">
            <Icon>
              <path d="M10.500 3v18M8 3.500h3M15.500 3v18M13 3.500h3" />
              <path d="M1 12h7M18 12h6M5 9v7M21 9v7" strokeWidth="2" />
            </Icon>
          </ToolButton>
          <ToolButton width="w-[28px]">CS</ToolButton>
          <ToolButton width="w-[31px]">SW</ToolButton>
        </Group>
        <Group>
          <ToolButton width="w-[30px]" title="Pointer">
            <Icon><path d="M9.500 3.500l8 10h-4l3 6l-2 1l-3-6l-2 3z" fill="#fff" /></Icon>
          </ToolButton>
          <ToolButton width="w-[30px]" title="Cross hair">
            <Icon><path d="M12.500 1v22M0 12.500h24M9.500 9.500h6v6h-6z" /></Icon>
          </ToolButton>
          <ToolButton width="w-[30px]" title="Horizontal line">
            <Icon><path d="M0 10.500h24M12.500 2v6M10 5.500l2.500 2.500l2.500-2.500M12.500 13v8M10 15.500l2.500-2.500l2.500 2.500" /></Icon>
          </ToolButton>
          <ToolButton width="w-[30px]" title="Line">
            <Icon><path d="M3.500 17.500h3v3h-3zM17.500 3.500h3v3h-3zM7 17L17 7" /></Icon>
          </ToolButton>
          <ToolButton width="w-[30px]" title="Ray">
            <Icon><path d="M3.500 17.500h3v3h-3zM11.500 10.500h3v3h-3zM7 17l5-4M15 10l6-7" /></Icon>
          </ToolButton>
          <ToolButton width="w-[30px]"><span className="text-[13px] font-normal">abc</span></ToolButton>
          <ToolButton width="w-[35px]" pressed>TC 1</ToolButton>
          <ToolButton width="w-[35px]">TC 2</ToolButton>
        </Group>
        <Group>
          <ToolButton width="w-[30px]">Rpl</ToolButton>
          <ToolButton width="w-[37px]">CVW</ToolButton>
          <ToolButton width="w-[30px]" title="Trade volume window">
            <Icon>
              <path d="M1 1.500h5M3.500 1v4M8.500 1l1 4l1-4M13.500 1l1 4l1-3l1 3l1-4" />
              <path d="M2 7h10v14h-10z" fill="#000" />
              <path d="M4.500 10v10M7.500 10v10M10.500 10v10M3 12.500h9M3 15.500h9M3 18.500h9" stroke="#fff" />
              <path d="M12 14.500h12M18.500 8v13" />
            </Icon>
          </ToolButton>
          <ToolButton width="w-[34px]">CTV</ToolButton>
        </Group>
        <Group>
          <ToolButton width="w-[33px]">Log</ToolButton>
          <ToolButton width="w-[33px]">TOP</ToolButton>
        </Group>
        <Group>
          <ToolButton width="w-[29px]">Dly</ToolButton>
          <ToolButton width="w-[29px]">We</ToolButton>
          <ToolButton width="w-[28px]">1M</ToolButton>
          <ToolButton width="w-[27px]">5M</ToolButton>
          <ToolButton width="w-[33px]">15M</ToolButton>
          <ToolButton width="w-[33px]">30M</ToolButton>
          <ToolButton width="w-[26px]">1H</ToolButton>
          <ToolButton width="w-[36px]" title="Scroll chart">
            <svg width="30" height="24" viewBox="0 0 30 24" stroke="#000" fill="#fff">
              <path d="M4 17V13L1 9L2 7L4 9V4H6V2H8V1H11V2H13V4H15V12L13 17Z" />
              <path d="M4 18h9v4h-9z" fill="#000" />
              <path d="M22.500 9v14M15.500 16.500h14M20 11.500l2.500-2.500l2.500 2.500M20 20.500l2.500 2.500l2.500-2.500M18 14l-2.500 2.500l2.500 2.500M27 14l2.500 2.500l-2.500 2.500" fill="none" />
            </svg>
          </ToolButton>
          <ToolButton width="w-[34px]" pressed>LFS</ToolButton>
          <ToolButton width="w-[34px]">DVP</ToolButton>
          <output className="flex h-[30px] w-[186px] items-center border-t border-r-2 border-b-2 border-t-[#808080] border-r-white border-b-white bg-[#50ff50] pl-[3px] font-['Open_Sans',sans-serif] text-[11px] font-normal whitespace-pre">
            DF:3180756  ST:4, 0
          </output>
        </Group>
      </div>

      <div className="mr-0.5 ml-[3px] flex h-[24px] items-start border-b border-white pt-0.5 font-['Noto_Sans',sans-serif] whitespace-nowrap">
        <button type="button" className="h-[21px] w-[88px] border-r-2 border-[#696969] bg-[#0078d7] text-white">6E charts 2016</button>
        <button type="button" className="h-[20px] w-[143px] border-r-2 border-[#808080]">M6E charts for MID study</button>
        <button type="button" className="h-[20px] w-[86px] border-r-2 border-[#808080]">ES charts 2016</button>
      </div>

      <main className="mt-[5px] mr-0.5 ml-1 bg-black text-white">
        <div className="flex h-[15px] pr-[49px]">
          <div className="flex flex-1 gap-[2px] overflow-hidden border-r border-white pl-px leading-[15px] whitespace-pre">
            <span className="w-[100px] shrink-0 bg-[#808080] text-center">Trade: 2@11892.5</span>
            <span className="w-[123px] shrink-0">6EZ7 [CB]  Renko 4t  #1</span>
            <span className="w-[55px] shrink-0 bg-white text-center text-black">C: 11834.0</span>
            <span className="w-[32px] shrink-0">T: 467</span>
            <span className="w-[49px] shrink-0 bg-[#ff0000] text-center text-black">Chg: -2.0</span>
            <span className="w-[52px] shrink-0 bg-[#00c000] text-center text-black">DChg: 8.5</span>
            <span className="w-[916px] shrink-0">
              2017-12-06 07:31:51 H: 11837.0 L: 11834.0 O: 11835.5 V: 656 B: 11831.0 A: 11831.5 12x3 0 BV: 356 AV: 300 DV: 62655 6EZ7 [CB]  1 Min   #13 | High/Low for Time Period - Extended
            </span>
            <span className="w-[131px] shrink-0 text-right text-[#700000]">----------ON-Hi: 11856.0</span>
            <span className="w-[136px] shrink-0 text-right text-[#700000]">----------ON-Lo: 11824.5</span>
            <span className="pl-1">(#13.ID1, Yes, Use Earliest Value from Corresponding</span>
          </div>
        </div>
        <PriceGraph />
        <StudyTitle>
          <span>DeltaMomentum</span>
          <span className="text-[#808080]">Delta Momentum: -193.000</span>
          <span>Cumulative Delta Bars - Volume</span>
          <span className="text-[#00ff00]">Open: -81</span>
          <span className="text-[#008000]">High: -70</span>
          <span className="text-[#ff0000]">Low: -145</span>
          <span className="text-[#800000]">Close: -137</span>
          <span> (Yes, No)</span>
        </StudyTitle>
        <DeltaGraph />
        <StudyTitle>
          <span className="pl-[3px]">Zig Zag</span>
          <span className="text-[#004080]">Zig Zag Oscillator: -12.0000</span>
          <span> (High, Low, 3, 1.5, 5.5, 5, None, Yes, No, No, No, Yes, Points, No, No, No, No, No, No, No, Yes, Yes, Percentage Of Bar, 5, None, No)</span>
        </StudyTitle>
        <ZigZagGraph />
        <div className="pt-px">
          <StudyTitle>
            <span>Study Subgraphs Subtract/Difference</span>
            <span className="text-[#00ff00]">Diff: 13.5</span>
            <span> (ID12.SG2, ID12.SG3, 0, No, Yes)</span>
          </StudyTitle>
        </div>
        <TimeScale />
      </main>

      <div className="mr-0.5 ml-1 flex h-[22px] items-start justify-between border-t border-white">
        <button type="button" aria-label="Scroll left" className="flex h-4 w-4 items-center justify-center">
          <svg width="7" height="9" fill="none" stroke="#505050" strokeWidth="2"><path d="M5 1L1.500 4.500L5 8" /></svg>
        </button>
        <div className="flex">
          <div className="h-4 w-[17px] bg-[#cdcdcd]" />
          <button type="button" aria-label="Scroll right" className="flex h-4 w-[18px] items-center justify-center">
            <svg width="7" height="9" fill="none" stroke="#505050" strokeWidth="2"><path d="M1.500 1L5 4.500L1.500 8" /></svg>
          </button>
        </div>
      </div>

      <div className="flex h-[26px] items-start gap-0.5 border-t-2 border-[#808080] pl-1 font-['Noto_Sans',sans-serif] whitespace-pre">
        <button type="button" className="h-[22px] w-[155px] border-r-2 border-b border-[#696969] bg-[#0078d7] text-white">6EZ7 [CB]  Renko 4t  #1  L:1</button>
        <button type="button" className="h-[21px] w-[98px] border-r-2 border-b-2 border-[#808080]">6EZ7  5 Min   #11</button>
        <button type="button" className="h-[21px] w-[80px] border-r-2 border-b-2 border-[#808080]">6EZ7 [CB]  #3</button>
        <button type="button" className="h-[21px] w-[105px] border-r-2 border-b-2 border-[#808080]">Historic Openings</button>
        <button type="button" className="h-[21px] w-[99px] border-r-2 border-b-2 border-[#808080]">6EZ7  5 Min   #17</button>
      </div>
    </div>
  )
}
